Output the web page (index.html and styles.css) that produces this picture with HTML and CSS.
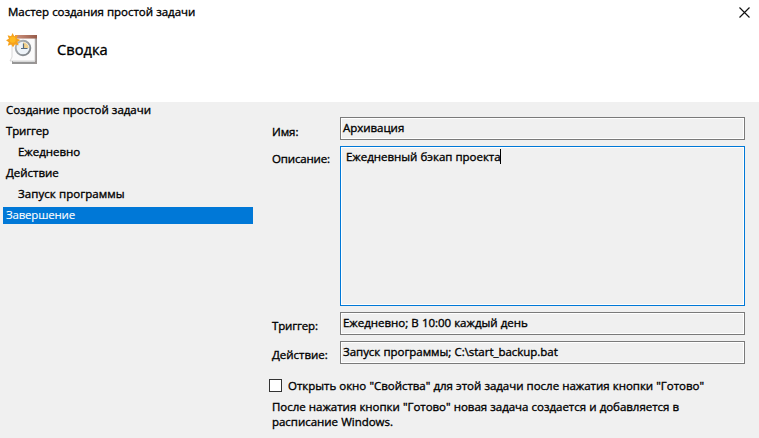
FILE: index.html
```html
<!DOCTYPE html>
<html lang="ru">
<head>
<meta charset="utf-8">
<title>Мастер создания простой задачи</title>
<link rel="stylesheet" href="styles.css">
</head>
<body>
<main class="wizard">
  <header class="titlebar">
    <h1 class="caption">Мастер создания простой задачи</h1>
    <button class="close" aria-label="Закрыть">
      <svg width="11" height="11" viewBox="0 0 11 11"><path d="M.5 .5l10 10M10.500 .5l-10 10" stroke="#111" stroke-width="1.150" fill="none"/></svg>
    </button>
  </header>
  <section class="banner">
    <svg class="task-icon" width="32" height="32" viewBox="0 0 32 32">
      <defs>
        <linearGradient id="top" x1="0" x2="1"><stop offset="0" stop-color="#d0937e"/><stop offset="1" stop-color="#955a49"/></linearGradient>
        <linearGradient id="ring" x1="0" y1="0" x2="1" y2="1"><stop offset="0" stop-color="#b8bcbf"/><stop offset="1" stop-color="#777d82"/></linearGradient>
      </defs>
      <path d="M6 27h25v4H6z" fill="#969696"/>
      <path d="M28 5h3v26h-3z" fill="#9b9593"/>
      <path d="M6 5h23v23H4l2-4z" fill="#fbfbfb" stroke="#c9c9c9" stroke-width=".7"/>
      <path d="M7 28.500h22" stroke="#d8d8d8"/>
      <path d="M9 2h22v3.500H9z" fill="url(#top)"/>
      <circle cx="17" cy="15" r="7.300" fill="#edf3f8" stroke="url(#ring)" stroke-width="1.900"/>
      <path d="M17 15V9.300a5.700 5.700 0 0 1 5.700 5.700z" fill="#f2d28d"/>
      <path d="M17.500 10.500v5h4M17.500 15.500H15" fill="none" stroke="#53687c" stroke-width="1.200"/>
      <path d="M6.500 0l1.800 3.300 3.500-1.400-1 3.700 3.500 1.300-3 2 1.400 3.400-3.800-.7-1.900 2.600-1.800-2.700-3.400 1.200 1-3.400L0 7.200l2.900-1.500-1.300-3.500 3.500 1z" fill="#f6a21c"/>
      <circle cx="6.700" cy="6.700" r="3" fill="#ffb91f"/>
    </svg>
    <h2 class="heading">Сводка</h2>
  </section>
  <div class="content">
    <nav class="steps">
      <div class="step">Создание простой задачи</div>
      <div class="step tight">Триггер</div>
      <div class="step sub">Ежедневно</div>
      <div class="step">Действие</div>
      <div class="step sub loose">Запуск программы</div>
      <div class="step current"><span>Завершение</span></div>
    </nav>
    <section class="summary">
      <div class="row"><span class="label">Имя:</span><div class="field"><span>Архивация</span></div></div>
      <div class="row"><span class="label tight">Описание:</span><div class="field description"><span>Ежедневный бэкап проекта</span><i class="caret"></i></div></div>
      <div class="row"><span class="label tight">Триггер:</span><div class="field"><span>Ежедневно; В 10:00 каждый день</span></div></div>
      <div class="row"><span class="label">Действие:</span><div class="field"><span>Запуск программы; C:\start_backup.bat</span></div></div>
      <div class="option"><span class="box"></span><span>Открыть окно "Свойства" для этой задачи после нажатия кнопки "Готово"</span></div>
      <p class="note">После нажатия кнопки "Готово" новая задача создается и добавляется в<br>расписание Windows.</p>
    </section>
  </div>
</main>
</body>
</html>
```
FILE: styles.css
```css
* { box-sizing: border-box; }
body { margin: 0; background: #fff; color: #000; font: 500 11.5px/15px "Open Sans", "Noto Sans", sans-serif; letter-spacing: -.03px; word-spacing: .2px; -webkit-text-stroke: .35px currentColor; }
.wizard { display: flex; flex-direction: column; width: 759px; height: 438px; overflow: hidden; white-space: nowrap; }
.titlebar { display: flex; justify-content: space-between; height: 32px; padding: 4px 8px 0; }
.caption { margin: 0; font-size: 11.5px; font-weight: 500; line-height: 16px; }
.close { display: block; width: 12px; height: 15px; margin-top: 1px; padding: 0; border: 0; background: none; }
.close svg { display: block; }
.banner { display: flex; height: 70px; padding: 1px 0 0 6px; }
.heading { margin: 6px 0 0 19px; font-size: 14.7px; font-weight: 500; line-height: 20px; letter-spacing: 0; }
.content { display: flex; flex: 1; background: #f0f0f0; }
.steps { width: 253px; padding-left: 3px; flex: none; }
.step { height: 17px; margin-bottom: 4px; padding-left: 3px; line-height: 15px; }
.sub { padding-left: 15px; }
.tight { letter-spacing: -.16px; }
.loose { letter-spacing: .05px; }
.current { background: #0078d7; color: #fff; letter-spacing: -.2px; -webkit-text-stroke-width: .1px; }
.summary { padding: 15px 0 0 16px; }
.row { display: flex; align-items: flex-start; margin-left: 3px; margin-bottom: 6px; }
.label { width: 68px; padding-top: 7px; flex: none; line-height: 15px; }
.row:nth-child(2) .label { padding-top: 5px; }
.row:nth-child(3) .label, .row:nth-child(4) .label { padding-top: 6px; }
.field { display: flex; width: 405px; height: 23px; padding: 2px 0 0 2px; border: 1px solid #7a7a7a; box-shadow: inset 0 0 0 1px #fff; }
.description { height: 160px; padding-left: 5px; border-color: #0078d7; }
.caret { width: 1px; height: 15px; margin-left: -1px; background: #000; }
.option { display: flex; align-items: center; height: 15px; margin-top: 14px; }
.box { width: 13px; height: 13px; margin-right: 6px; border: 1px solid #333; background: #fff; }
.note { margin: 6px 0 0 3px; }
```
